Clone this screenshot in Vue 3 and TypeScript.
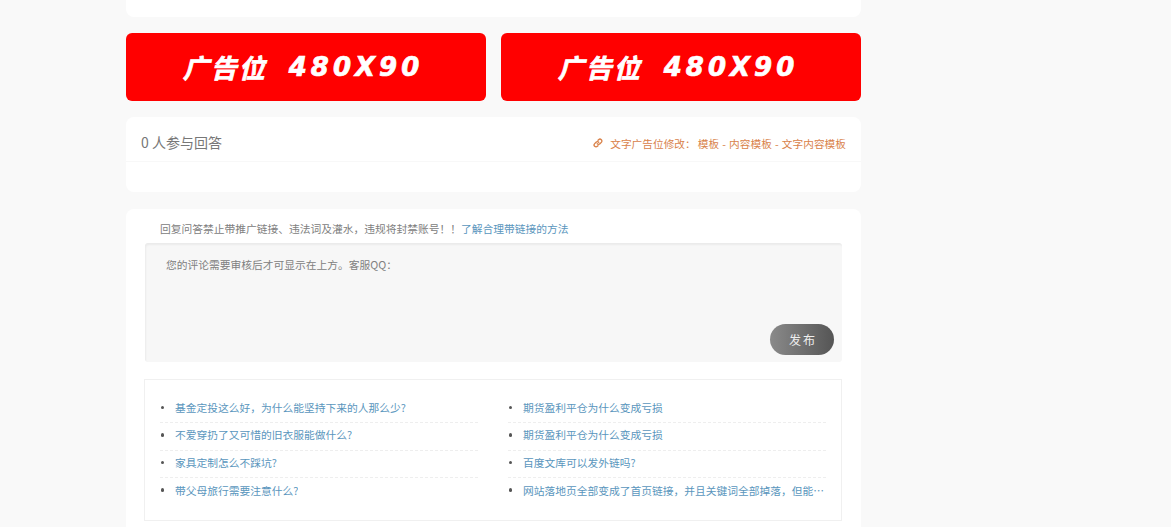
<script setup lang="ts">
const leftLinks: string[] = [
  '基金定投这么好，为什么能坚持下来的人那么少?',
  '不爱穿扔了又可惜的旧衣服能做什么?',
  '家具定制怎么不踩坑?',
  '带父母旅行需要注意什么?',
]
const rightLinks: string[] = [
  '期货盈利平仓为什么变成亏损',
  '期货盈利平仓为什么变成亏损',
  '百度文库可以发外链吗?',
  '网站落地页全部变成了首页链接，并且关键词全部掉落，但能正常访问怎么办',
]
</script>

<template>
  <div class="page">
    <main class="column">
      <div class="card top-card"></div>

      <div class="ads">
        <a class="ad"><span class="ad-cn">广告位</span><span class="ad-en">480X90</span></a>
        <a class="ad"><span class="ad-cn">广告位</span><span class="ad-en">480X90</span></a>
      </div>

      <section class="card answers">
        <header class="answers-head">
          <h3 class="answers-title">0 人参与回答</h3>
          <div class="text-ad">
            <svg class="link-icon" viewBox="0 0 16 16" fill="none" stroke="currentColor" stroke-width="2.2" stroke-linecap="round">
              <path d="M6.8 9.2a3 3 0 0 0 4.3 0l2.2-2.2a3 3 0 0 0-4.3-4.3L8 3.7" />
              <path d="M9.2 6.8a3 3 0 0 0-4.3 0L2.7 9a3 3 0 0 0 4.3 4.3l1-1" />
            </svg>
            <span class="text-ad-label">文字广告位修改：</span>
            <span class="text-ad-links">模板 - 内容模板 - 文字内容模板</span>
          </div>
        </header>
      </section>

      <section class="card reply">
        <p class="notice">回复问答禁止带推广链接、违法词及灌水，违规将封禁账号！！<a class="notice-link">了解合理带链接的方法</a></p>
        <div class="editor">
          <p class="placeholder">您的评论需要审核后才可显示在上方。客服QQ：</p>
          <button class="publish" type="button">发布</button>
        </div>
        <div class="related">
          <ul class="related-list">
            <li v-for="(item, i) in leftLinks" :key="i" class="related-item"><a>{{ item }}</a></li>
          </ul>
          <ul class="related-list">
            <li v-for="(item, i) in rightLinks" :key="i" class="related-item"><a>{{ item }}</a></li>
          </ul>
        </div>
      </section>
    </main>
  </div>
</template>

<style>
html, body { margin: 0; background: #f9f9f9; }
</style>

<style scoped>
.page {
  height: 527px;
  overflow: hidden;
  background: #f9f9f9;
  font-family: "Noto Sans CJK SC", "Liberation Sans", sans-serif;
  color: #777;
}
.column {
  width: 735px;
  margin-left: 126px;
  display: flex;
  flex-direction: column;
}
.card {
  background: #fff;
  border-radius: 8px;
}
.top-card {
  height: 17px;
  border-radius: 0 0 8px 8px;
}
.ads {
  display: flex;
  gap: 15px;
  margin-top: 16px;
}
.ad {
  flex: 1;
  height: 68px;
  box-sizing: border-box;
  padding-right: 6px;
  background: #ff0000;
  border-radius: 6px;
  color: #fff;
  display: flex;
  align-items: center;
  justify-content: center;
  gap: 22px;
  font-style: italic;
  font-weight: 700;
  line-height: 1;
  -webkit-text-stroke: 0.7px #fff;
}
.ad-cn {
  font-size: 26px;
  letter-spacing: 2px;
}
.ad-en {
  font-family: "DejaVu Sans", sans-serif;
  font-size: 26px;
  letter-spacing: 4px;
}
.answers {
  margin-top: 16px;
  height: 75px;
}
.answers-head {
  height: 45px;
  box-sizing: border-box;
  border-bottom: 1px solid #f8f8f8;
  display: flex;
  align-items: center;
  justify-content: space-between;
  padding: 6px 15px 0;
}
.answers-title {
  margin: 0;
  font-size: 14px;
  font-weight: 400;
  color: #777;
}
.text-ad {
  display: flex;
  align-items: center;
  padding-top: 2px;
  font-size: 10.7px;
  color: #d9824a;
  white-space: nowrap;
}
.text-ad-links {
  word-spacing: 0.75px;
}
.link-icon {
  width: 10px;
  height: 10px;
  margin-right: 7px;
}
.text-ad-label {
  margin-right: 2px;
}
.reply {
  margin-top: 17px;
  height: 340px;
  padding: 0 19px 0 18px;
}
.notice {
  margin: 0;
  padding: 13px 0 0 16px;
  height: 34px;
  box-sizing: border-box;
  font-size: 10.75px;
  line-height: 14px;
  color: #808080;
}
.notice-link {
  color: #5a96bd;
}
.editor {
  position: relative;
  height: 119px;
  margin-left: 1px;
  box-sizing: border-box;
  padding: 14px 21px;
  background: #f7f7f7;
  border-radius: 3px;
  box-shadow: inset 1px 2px 2px rgba(0, 0, 0, 0.05);
}
.placeholder {
  margin: 0;
  font-size: 10.75px;
  line-height: 16px;
  color: #808080;
}
.publish {
  position: absolute;
  right: 8px;
  bottom: 7px;
  width: 64px;
  height: 31px;
  border: none;
  border-radius: 16px;
  background: linear-gradient(90deg, #8a8a8a, #555);
  color: #eee;
  font-family: inherit;
  font-size: 12px;
  letter-spacing: 2px;
  padding: 0 0 0 2px;
}
.related {
  margin-top: 17px;
  height: 142px;
  box-sizing: border-box;
  border: 1px solid #f0f0f0;
  padding: 16px 15px 0;
  display: flex;
  gap: 30px;
}
.related-list {
  flex: 1;
  min-width: 0;
  margin: 0;
  padding: 0;
  list-style: none;
}
.related-item {
  height: 27.33px;
  box-sizing: border-box;
  padding-bottom: 3px;
  border-bottom: 1px dashed #eee;
  display: flex;
  align-items: center;
  gap: 11px;
  font-size: 10.75px;
  color: #5a96bd;
}
.related-item:last-child {
  border-bottom: none;
}
.related-item::before {
  content: "";
  flex: none;
  width: 3.5px;
  height: 3.5px;
  margin-left: 0.5px;
  border-radius: 50%;
  background: #555;
}
.related-item a {
  min-width: 0;
  overflow: hidden;
  white-space: nowrap;
  text-overflow: ellipsis;
}
</style>
